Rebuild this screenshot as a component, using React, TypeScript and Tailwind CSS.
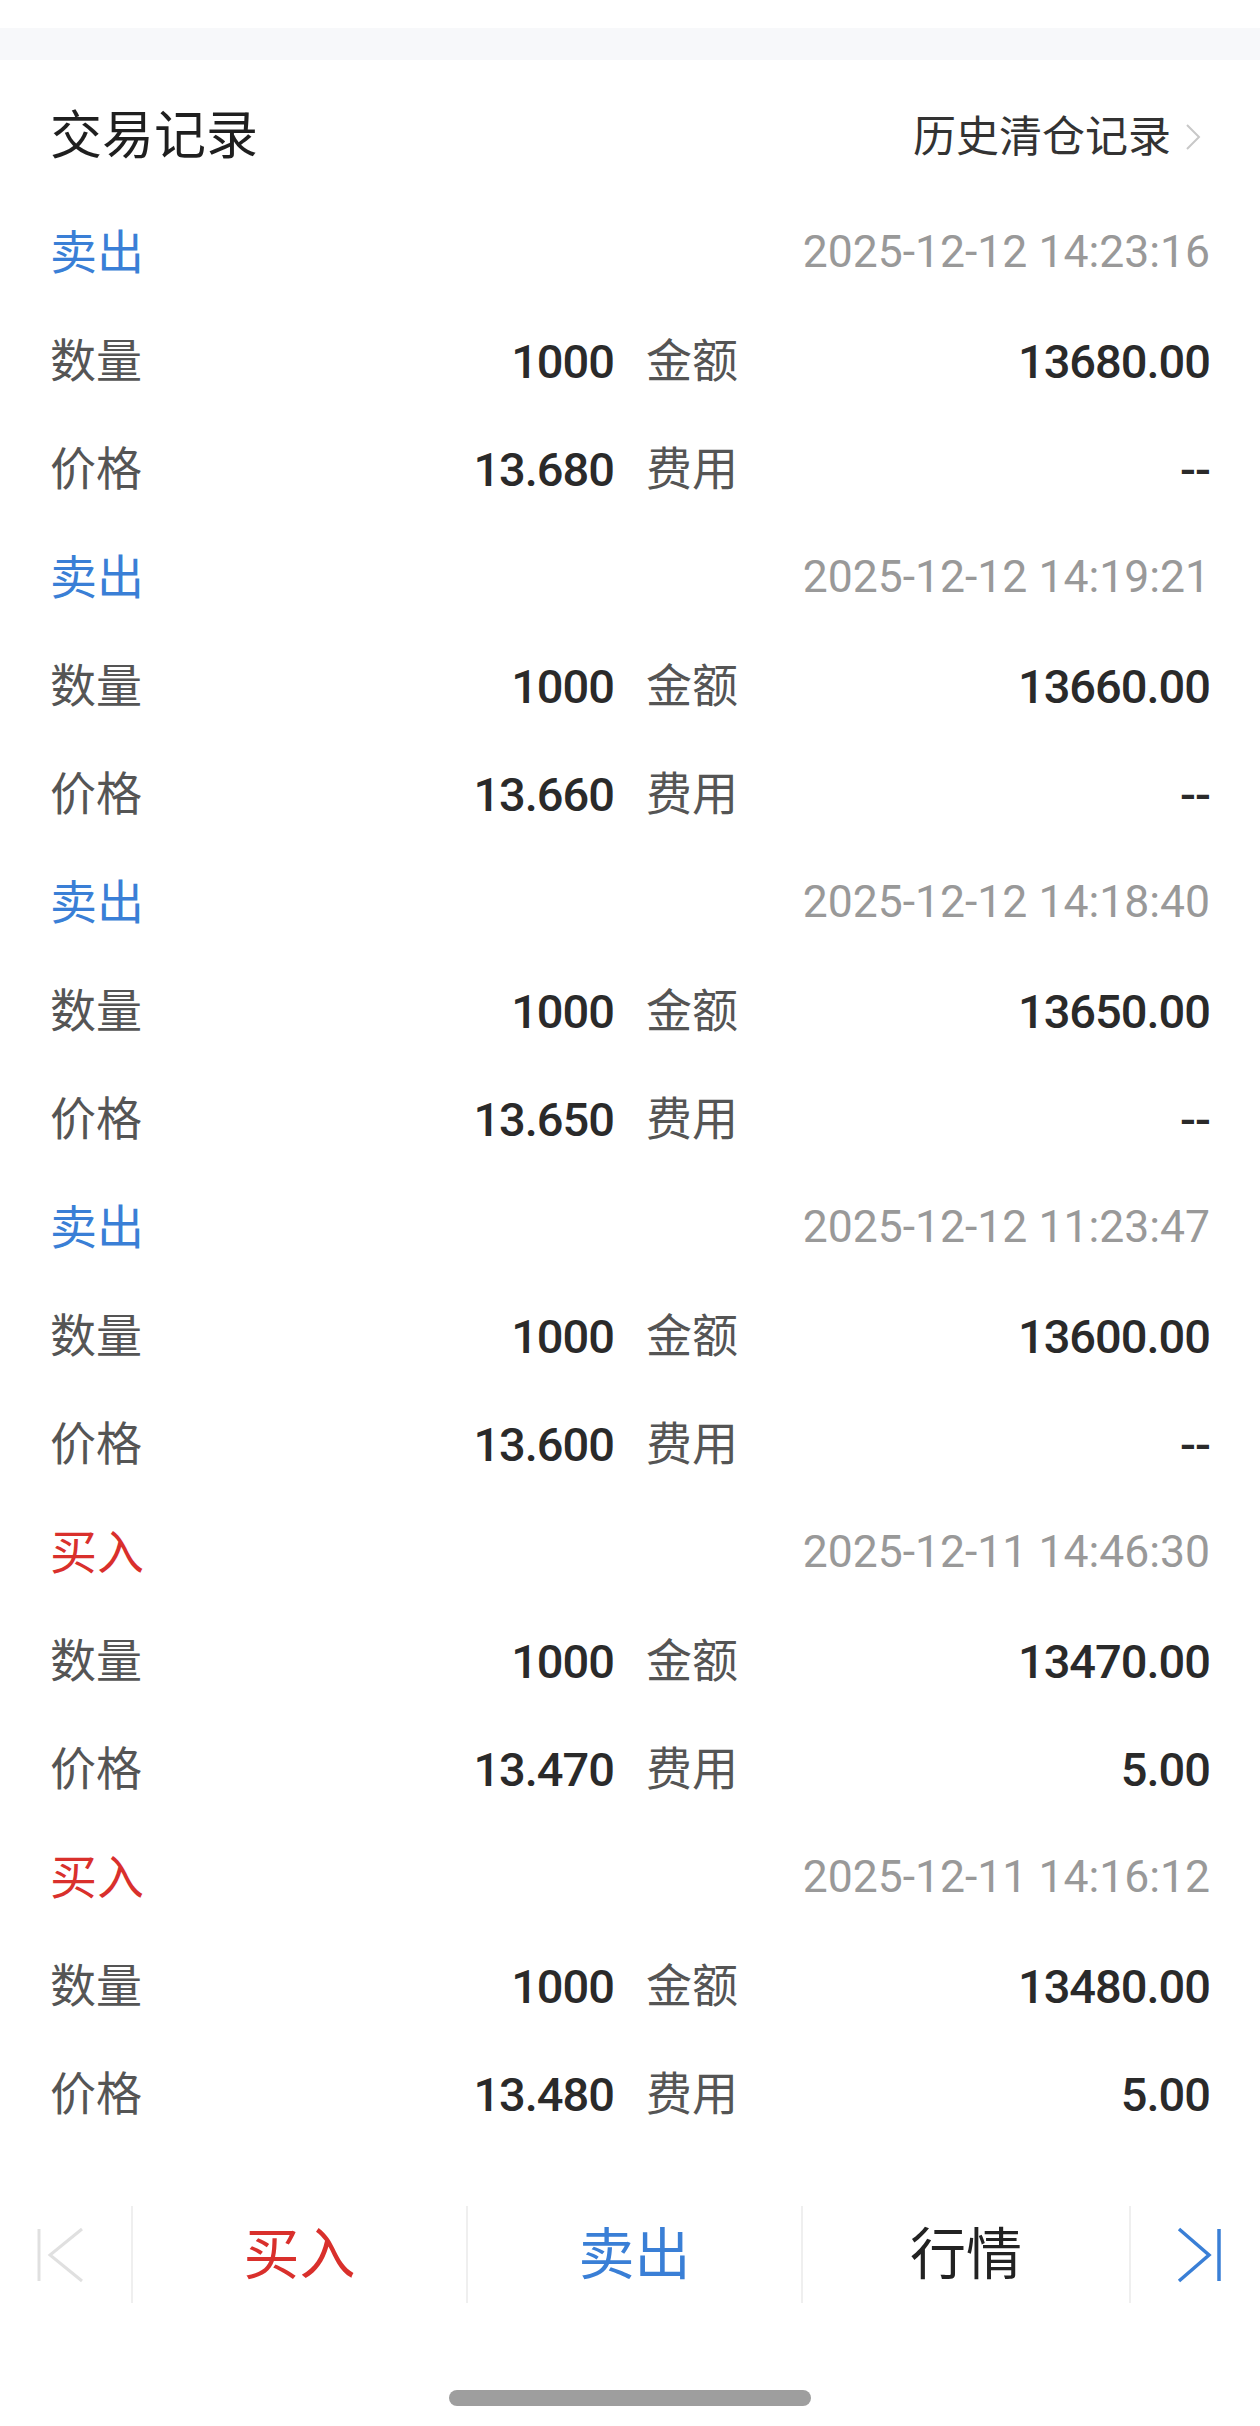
import React from "react";

type Trade = {
  side: "buy" | "sell";
  time: string;
  qty: string;
  amount: string;
  price: string;
  fee: string;
};

const trades: Trade[] = [
  { side: "sell", time: "2025-12-12 14:23:16", qty: "1000", amount: "13680.00", price: "13.680", fee: "--" },
  { side: "sell", time: "2025-12-12 14:19:21", qty: "1000", amount: "13660.00", price: "13.660", fee: "--" },
  { side: "sell", time: "2025-12-12 14:18:40", qty: "1000", amount: "13650.00", price: "13.650", fee: "--" },
  { side: "sell", time: "2025-12-12 11:23:47", qty: "1000", amount: "13600.00", price: "13.600", fee: "--" },
  { side: "buy", time: "2025-12-11 14:46:30", qty: "1000", amount: "13470.00", price: "13.470", fee: "5.00" },
  { side: "buy", time: "2025-12-11 14:16:12", qty: "1000", amount: "13480.00", price: "13.480", fee: "5.00" },
];

function Field({ label, value }: { label: string; value: string }) {
  return (
    <div className="flex items-center justify-between">
      <span className="text-[46px] leading-none text-[#555555]">{label}</span>
      <span className="text-[47px] leading-none font-medium tracking-[-1px] text-[#2a2a2a]">{value}</span>
    </div>
  );
}

function TradeItem({ trade }: { trade: Trade }) {
  const isBuy = trade.side === "buy";
  return (
    <div className="flex flex-col">
      {/* header: side + timestamp */}
      <div className="h-[109px] flex items-center justify-between">
        <span className={`text-[47px] leading-none ${isBuy ? "text-[#d9302c]" : "text-[#3a7fd6]"}`}>
          {isBuy ? "买入" : "卖出"}
        </span>
        <span className="text-[44.5px] leading-none text-[#999999]">{trade.time}</span>
      </div>
      <div className="h-[108px] grid grid-cols-2 gap-x-[32px] items-center">
        <Field label="数量" value={trade.qty} />
        <Field label="金额" value={trade.amount} />
      </div>
      <div className="h-[108px] grid grid-cols-2 gap-x-[32px] items-center">
        <Field label="价格" value={trade.price} />
        <Field label="费用" value={trade.fee} />
      </div>
    </div>
  );
}

export default function App() {
  return (
    <div
      className="w-[1260px] h-[2426px] bg-white flex flex-col overflow-hidden"
      style={{ fontFamily: 'Roboto, "Noto Sans CJK SC", sans-serif' }}
    >
      <div className="h-[28px]" />
      <div className="h-[32px] bg-[#f7f8fa]" />

      {/* section title */}
      <div className="h-[138px] pt-[16px] px-[50px] flex items-center justify-between">
        <span className="text-[52px] leading-none text-[#1f1f1f]">交易记录</span>
        <div className="flex items-center gap-[14px] mr-[9px]">
          <span className="text-[43px] leading-none text-[#333333]">历史清仓记录</span>
          <svg width="16" height="28" viewBox="0 0 16 28" fill="none">
            <path d="M2 2 L14 14 L2 26" stroke="#c8c8c8" strokeWidth="2" />
          </svg>
        </div>
      </div>

      {/* records */}
      <div className="px-[50px] flex flex-col">
        {trades.map((t, i) => (
          <TradeItem key={i} trade={t} />
        ))}
      </div>

      {/* bottom action bar */}
      <div className="mt-[58px] h-[97px] flex">
        <div className="w-[131px] flex items-center pl-[36px]">
          <svg width="50" height="56" viewBox="0 0 50 56" fill="none">
            <path d="M3 2 V54" stroke="#e0e0e0" strokeWidth="3" />
            <path d="M46 2 L14 28 L46 54" stroke="#e0e0e0" strokeWidth="3" />
          </svg>
        </div>
        <div className="w-[335px] border-l-2 border-[#efefef] flex items-center justify-center">
          <span className="text-[56px] leading-none text-[#d9302c]">买入</span>
        </div>
        <div className="w-[335px] border-l-2 border-[#efefef] flex items-center justify-center">
          <span className="text-[56px] leading-none text-[#3a7fd6]">卖出</span>
        </div>
        <div className="w-[328px] border-l-2 border-[#efefef] flex items-center justify-center">
          <span className="text-[56px] leading-none text-[#222222]">行情</span>
        </div>
        <div className="flex-1 border-l-2 border-[#efefef] flex items-center pl-[46px]">
          <svg width="46" height="56" viewBox="0 0 46 56" fill="none">
            <path d="M2 2 L32 28 L2 54" stroke="#3a7fd6" strokeWidth="3.5" />
            <path d="M42 2 V54" stroke="#3a7fd6" strokeWidth="3.5" />
          </svg>
        </div>
      </div>

      {/* home indicator */}
      <div className="mt-[87px] flex justify-center">
        <div className="w-[362px] h-[16px] rounded-full bg-[#9e9e9e]" />
      </div>
    </div>
  );
}
